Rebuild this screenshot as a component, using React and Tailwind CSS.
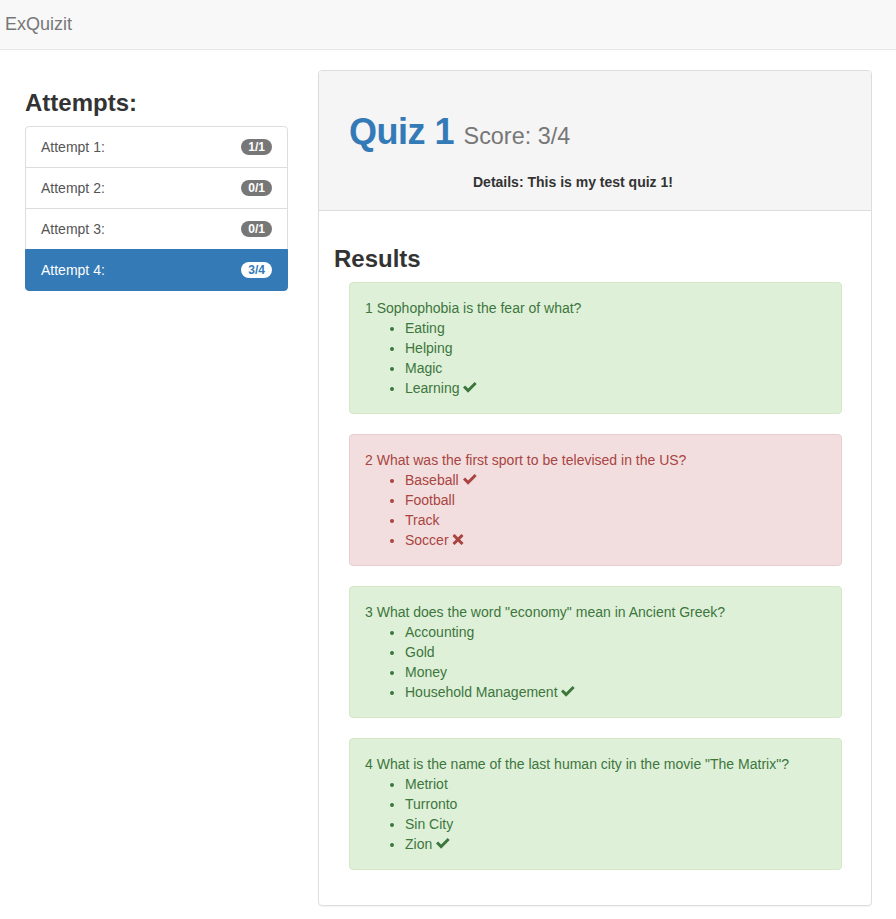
import React from 'react';

const attempts = [
  { label: 'Attempt 1:', score: '1/1' },
  { label: 'Attempt 2:', score: '0/1' },
  { label: 'Attempt 3:', score: '0/1' },
  { label: 'Attempt 4:', score: '3/4', active: true },
];

const questions = [
  {
    n: 1,
    text: 'Sophophobia is the fear of what?',
    correct: true,
    answers: [
      { t: 'Eating' },
      { t: 'Helping' },
      { t: 'Magic' },
      { t: 'Learning', mark: 'ok' },
    ],
  },
  {
    n: 2,
    text: 'What was the first sport to be televised in the US?',
    correct: false,
    answers: [
      { t: 'Baseball', mark: 'ok' },
      { t: 'Football' },
      { t: 'Track' },
      { t: 'Soccer', mark: 'remove' },
    ],
  },
  {
    n: 3,
    text: 'What does the word "economy" mean in Ancient Greek?',
    correct: true,
    answers: [
      { t: 'Accounting' },
      { t: 'Gold' },
      { t: 'Money' },
      { t: 'Household Management', mark: 'ok' },
    ],
  },
  {
    n: 4,
    text: 'What is the name of the last human city in the movie "The Matrix"?',
    correct: true,
    answers: [
      { t: 'Metriot' },
      { t: 'Turronto' },
      { t: 'Sin City' },
      { t: 'Zion', mark: 'ok' },
    ],
  },
];

// glyphicon-ok lookalike
function OkIcon() {
  return (
    <svg width="14" height="11" viewBox="0 0 14 11" className="inline-block align-baseline" fill="currentColor">
      <path d="M0 5.6 L2.1 3.5 L5.1 6.5 L11.6 0 L13.7 2.1 L5.1 10.7 Z" />
    </svg>
  );
}

// glyphicon-remove lookalike
function RemoveIcon() {
  return (
    <svg width="12" height="11" viewBox="0 0 12 11" className="inline-block align-baseline" fill="none" stroke="currentColor">
      <path d="M1.5 1 L10.5 10 M10.5 1 L1.5 10" strokeWidth="3" />
    </svg>
  );
}

function QuestionResult({ q }) {
  const tone = q.correct
    ? 'bg-[#dff0d8] border-[#d6e9c6] text-[#3c763d]'
    : 'bg-[#f2dede] border-[#ebccd1] text-[#a94442]';
  return (
    <div className={`ml-[15px] mr-[14px] mb-[20px] border rounded-[4px] p-[15px] ${tone}`}>
      <div>
        {q.n} {q.text}
      </div>
      <ul className="list-disc pl-[40px]">
        {q.answers.map((a) => (
          <li key={a.t}>
            {a.t}
            {a.mark === 'ok' && (
              <>
                {' '}
                <OkIcon />
              </>
            )}
            {a.mark === 'remove' && (
              <>
                {' '}
                <RemoveIcon />
              </>
            )}
          </li>
        ))}
      </ul>
    </div>
  );
}

export default function App() {
  return (
    <div className="min-h-[919px] bg-white text-[14px] leading-[20px] text-[#333] font-['Liberation_Sans',Arial,sans-serif]">
      <nav className="h-[50px] bg-[#f8f8f8] border-b border-[#e7e7e7] flex items-start">
        <a className="pl-[5px] pt-[14px] text-[18px] leading-[20px] text-[#777]">ExQuizit</a>
      </nav>

      <div className="flex gap-[30px] pl-[25px] pr-[24px] mt-[20px]">
        <div className="w-[263px] shrink-0">
          <h3 className="mt-[20px] mb-[10px] text-[24px] leading-[26px] font-bold">Attempts:</h3>
          <div>
            {attempts.map((a, i) => (
              <div
                key={a.label}
                className={`relative -mb-px flex items-center justify-between border px-[15px] py-[10px] ${
                  i === 0 ? 'rounded-t-[4px]' : ''
                } ${i === attempts.length - 1 ? 'rounded-b-[4px]' : ''} ${
                  a.active
                    ? 'z-10 bg-[#337ab7] border-[#337ab7] text-white'
                    : 'bg-white border-[#ddd] text-[#555]'
                }`}
              >
                <span>{a.label}</span>
                <span
                  className={`rounded-full px-[7px] py-[2px] text-[12px] leading-[12px] font-bold ${
                    a.active ? 'bg-white text-[#337ab7]' : 'bg-[#777] text-white'
                  }`}
                >
                  {a.score}
                </span>
              </div>
            ))}
          </div>
        </div>

        <div className="flex-1 border border-[#ddd] rounded-[4px] shadow-[0_1px_1px_rgba(0,0,0,0.05)] mb-[13px]">
          <div className="bg-[#f5f5f5] border-b border-[#ddd] rounded-t-[3px] pt-[41px] pb-[18px]">
            <h1 className="pl-[30px] h-[40px] text-[36px] leading-[40px] font-bold tracking-[-0.5px] text-[#337ab7]">
              Quiz 1{' '}
              <small className="text-[23.4px] leading-none font-normal tracking-normal text-[#777]">Score: 3/4</small>
            </h1>
            <h4 className="mt-[20px] pl-[154px] text-[14px] leading-[20px] font-bold">Details: This is my test quiz 1!</h4>
          </div>
          <div className="p-[15px]">
            <h3 className="mt-[20px] mb-[10px] text-[24px] leading-[26px] font-bold">Results</h3>
            {questions.map((q) => (
              <QuestionResult key={q.n} q={q} />
            ))}
          </div>
        </div>
      </div>
    </div>
  );
}
